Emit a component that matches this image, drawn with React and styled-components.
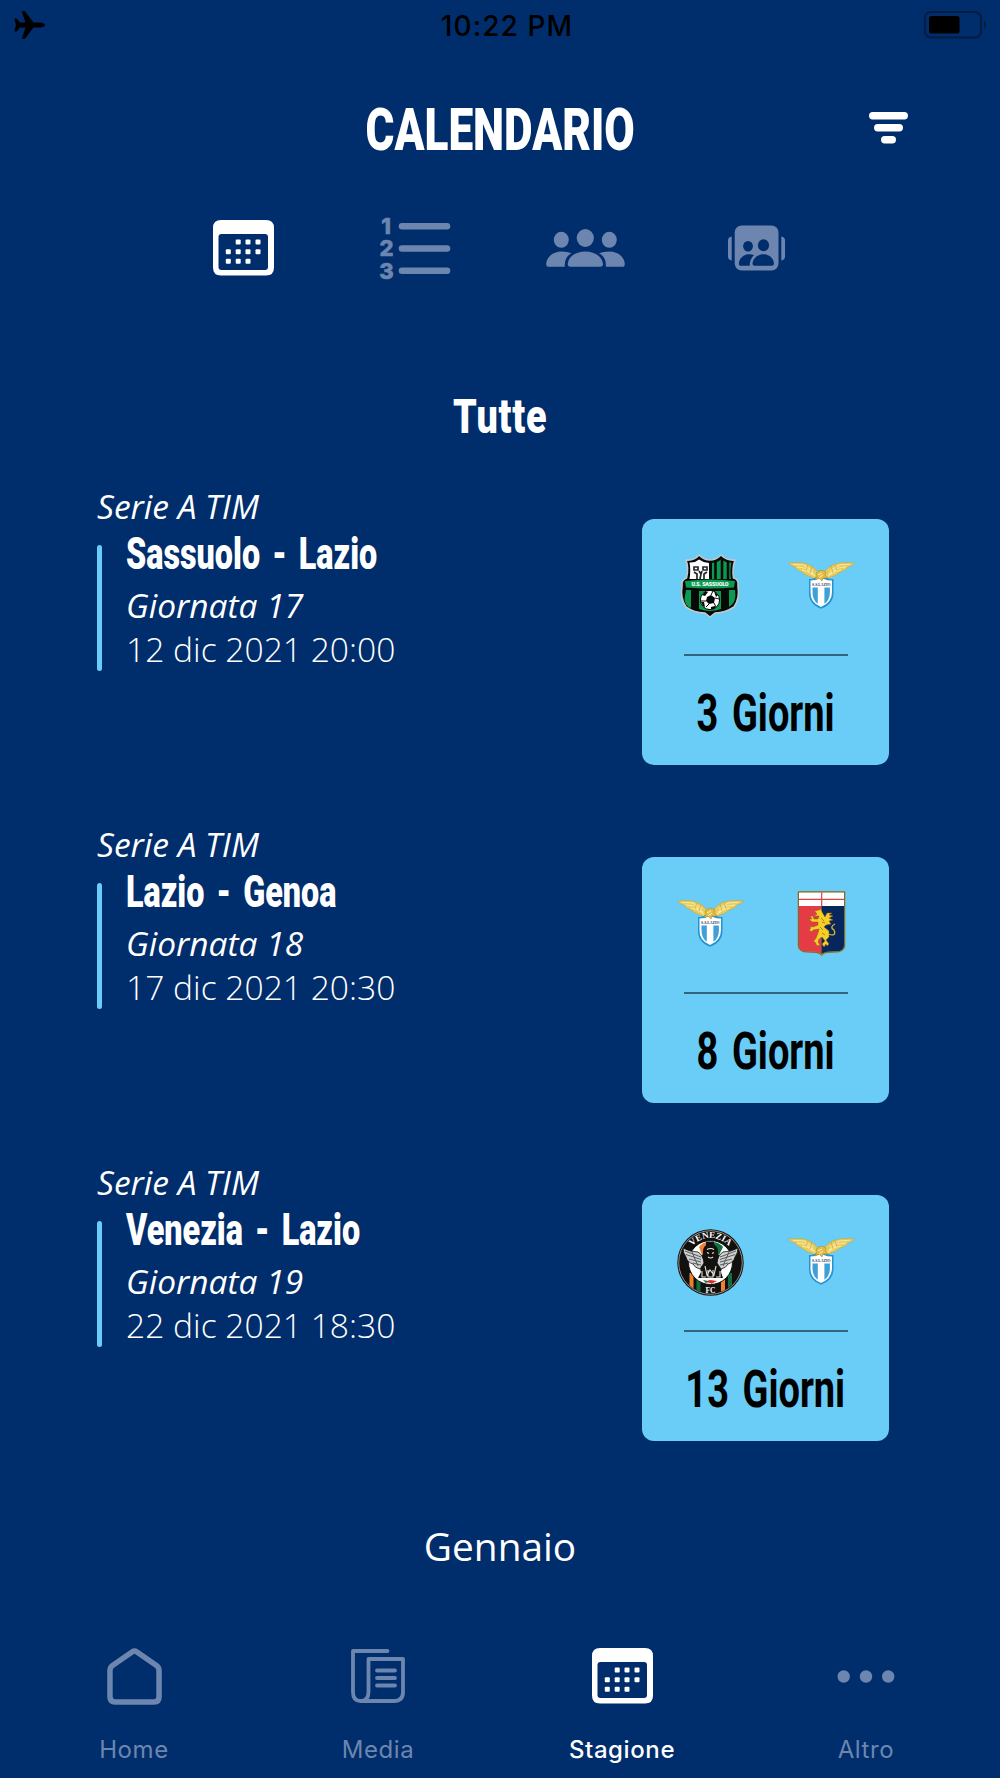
import styled, { createGlobalStyle } from "styled-components";

const MUTED = "#6c86af";

const matches = [
  {
    id: 1,
    league: "Serie A TIM",
    name: "Sassuolo - Lazio",
    round: "Giornata 17",
    date: "12 dic 2021 20:00",
    home: "sassuolo",
    away: "lazio",
    left: "3 Giorni",
  },
  {
    id: 2,
    league: "Serie A TIM",
    name: "Lazio - Genoa",
    round: "Giornata 18",
    date: "17 dic 2021 20:30",
    home: "lazio",
    away: "genoa",
    left: "8 Giorni",
  },
  {
    id: 3,
    league: "Serie A TIM",
    name: "Venezia - Lazio",
    round: "Giornata 19",
    date: "22 dic 2021 18:30",
    home: "venezia",
    away: "lazio",
    left: "13 Giorni",
  },
];

function App() {
  return (
    <Screen>
      <GlobalStyle />
      <StatusBar>
        <PlaneIcon />
        <Time>10:22 PM</Time>
        <BatteryIcon />
      </StatusBar>
      <Header>
        <span />
        <Title>CALENDARIO</Title>
        <FilterButton>
          <FilterIcon />
        </FilterButton>
      </Header>
      <Sections>
        <Section $active>
          <CalendarIcon />
        </Section>
        <Section>
          <RankingIcon />
        </Section>
        <Section>
          <TeamIcon />
        </Section>
        <Section>
          <CardsIcon />
        </Section>
      </Sections>
      <Filter>
        <Condensed $size={49} $scale={0.77} $spacing={1}>
          Tutte
        </Condensed>
      </Filter>
      <MatchList>
        {matches.map((match) => (
          <Match key={match.id} match={match} />
        ))}
      </MatchList>
      <Month>Gennaio</Month>
      <TabBar>
        <Tab>
          <TabIcon>
            <HomeIcon />
          </TabIcon>
          Home
        </Tab>
        <Tab>
          <TabIcon>
            <MediaIcon />
          </TabIcon>
          Media
        </Tab>
        <Tab $active>
          <TabIcon>
            <CalendarIcon />
          </TabIcon>
          Stagione
        </Tab>
        <Tab>
          <TabIcon>
            <DotsIcon />
          </TabIcon>
          Altro
        </Tab>
      </TabBar>
    </Screen>
  );
}

const Match = ({ match }) => {
  return (
    <MatchRow>
      <div>
        <League>{match.league}</League>
        <Details>
          <Marker />
          <div>
            <Name>
              <Condensed $size={44} $scale={0.735} $origin="left">
                {match.name}
              </Condensed>
            </Name>
            <Round>{match.round}</Round>
            <MatchDate>{match.date}</MatchDate>
          </div>
        </Details>
      </div>
      <Countdown>
        <Crests>
          <Crest team={match.home} />
          <Crest team={match.away} />
        </Crests>
        <Divider />
        <Days>
          <Condensed $size={51} $scale={0.745} $weight={700}>
            {match.left}
          </Condensed>
        </Days>
      </Countdown>
    </MatchRow>
  );
};

const Crest = ({ team }) => {
  const Drawing = crests[team];
  return (
    <svg width="67" height="67" viewBox="0 0 67 67">
      <Drawing />
    </svg>
  );
};

const Sassuolo = () => (
  <g>
    <path
      d="M9 7Q17 8 22 2Q27 7 33 7Q39 7 44 2Q50 8 58 7Q55 15 56.500 25Q62 26 61 33Q63 46 57 54Q48 60 38 60L33 64L28 60Q17 60 9 54Q3 46 5 33Q4 27 9.500 25Q12 15 9 7Z"
      fill="#050a08"
      stroke="#c3c9cb"
      strokeWidth="1.600"
      strokeLinejoin="round"
    />
    <path d="M12.500 9.500Q18 10 22 6.500Q27 10 32 10V26H12.500Q14 17 12.500 9.500Z" fill="#fff" />
    <path d="M35 10Q41 9 44 6.500Q49 10 54.500 9.500Q52.500 17 54 26H35Z" fill="#0b9a52" />
    <path d="M38.500 9V26M45 7V26M51 9V26" stroke="#050a08" strokeWidth="2.600" />
    <path
      d="M17 14h4v3h-4zM26 14h4v3h-4zM17 19l3 2v5M30 19l-3 2v5M22 18l2 3-1 5M25 18l-1 3"
      fill="none"
      stroke="#20292a"
      strokeWidth="1.700"
    />
    <path d="M8 28Q33 25 58 28L57 34.500Q33 36.500 9 34.500Z" fill="#0b9a52" />
    <text
      x="33"
      y="33.200"
      textAnchor="middle"
      fill="#fff"
      fontFamily="Roboto, sans-serif"
      fontWeight="900"
      fontSize="5.400"
      textLength="37"
    >
      U.S. SASSUOLO
    </text>
    <path
      d="M9 37H14V55Q8 53 7.500 46ZM22 38H44V56Q33 60 22 56ZM52 37H58Q60 50 52 54Z"
      fill="#0b9a52"
    />
    <circle cx="33" cy="47" r="9.600" fill="#fff" stroke="#050a08" strokeWidth="1" />
    <path
      d="M30 44l4-2 4 3-1 5-5 1-3-3zM25 42l3-3 3 0-3 4zM37 38l4 4-2 2zM24 49l3 0 1 5-2-1zM34 54l4-1 0 3-4 0z"
      fill="#050a08"
    />
    <path d="M34 42l2-4M38 45l4 1M37 50l2 4M32 51l-3 3M29 48l-5 0" stroke="#050a08" />
  </g>
);

const Lazio = () => (
  <g>
    <path
      d="M0.500 9.800H14Q23 11 28 17L33 23L38 17Q43 11 53 9.800H66.500L64 12.500L60 14L57 17L52 19L48 22L43 24L39 26L33 28L27 26L23 24L18 22L14 19L10 17L7 14L3 12.500Z"
      fill="#e7cc5c"
      stroke="#c9a53c"
      strokeWidth="0.600"
      strokeLinejoin="round"
    />
    <path
      d="M5 11.300L16 12L25 18M9 14L17 15L26 21M14 17L20 18.500L27 23M62 11.300L51 12L42 18M58 14L50 15L41 21M53 17L47 18.500L40 23"
      fill="none"
      stroke="#f7e8a0"
      strokeWidth="1.100"
    />
    <path d="M20 11.500l-2 6M24 13l-2 7M47 11.500l2 6M43 13l2 7" stroke="#c9a53c" strokeWidth="0.700" />
    <path
      d="M21 26Q26 26 28 24Q33 28 38 24Q40 26 45.500 26V39Q46 51 33 55.800Q20.500 51 21 39Z"
      fill="#2493d2"
    />
    <path
      d="M22.500 27.500Q28 27 30 26H36Q39 27.500 44 27.500V39Q44 49.500 33 54Q22 49.500 22.500 39Z"
      fill="#fff"
    />
    <path
      d="M24.500 34.500H29.800V50.800Q24.500 47 24.500 39ZM36.400 34.500H41.900V39Q42 47 36.400 50.800Z"
      fill="#3e9fd9"
    />
    <path
      d="M28 20Q33 15 38 19L37 22L40 25L35 25L34 28L31 25L27 27L29 23Z"
      fill="#dfbd48"
      stroke="#b98d2c"
      strokeWidth="0.600"
    />
    <path d="M30 22l4-2M31 25l4-3" stroke="#fff0a8" />
    <text
      x="33.300"
      y="32.900"
      textAnchor="middle"
      fill="#26375a"
      fontFamily="Liberation Serif, serif"
      fontWeight="700"
      fontSize="4.600"
      textLength="18.500"
      lengthAdjust="spacingAndGlyphs"
    >
      S.S.LAZIO
    </text>
  </g>
);

const Genoa = () => (
  <g>
    <path
      d="M9.500 0H57.500V54Q57.500 60 51 61.500L42 62Q35 62 33.700 66Q32 62 25 62L16 61.500Q9.500 60 9.500 54Z"
      fill="#b4a64f"
    />
    <path d="M11 1.400H56V15H11Z" fill="#fff" />
    <path d="M11 15H33.500V63Q31 60.500 25 60.500L16 60Q11 59 11 54Z" fill="#e43b45" />
    <path d="M33.500 15H56V54Q56 59 51 60L42 60.500Q36 60.500 33.500 63Z" fill="#07265c" />
    <path d="M33.700 1.400V15M11 8.300H56" stroke="#dd3f46" strokeWidth="1.200" />
    <path
      d="M10.400 0.900H56.600V54Q56.600 59 51 60.700L42 61.200Q35.500 61.200 33.600 64.200Q31.500 61.200 25 61.200L16 60.700Q10.400 59 10.400 54Z"
      fill="none"
      stroke="#353d47"
      strokeWidth="0.600"
    />
    <path
      d="M26.500 20L31 19L33 18L34 21L37 26L39 22L44 22L41 24L45 25L41 27L45 29L41 30L43 33L38 34L36 36L41 40L41 46L38 49L41 53L39 55L38 53L36 56L34 53L37 50L34 46L31 48L30 51L32 54L29 55L27 51L25 51L28 47L30 42L31 38L25 39L24 41L21 39L23 37L21 35L25 36L30 34L30 31L24 31L21 28L24 28L22 25L25 25L26 28L30 28L31 25L26 25L29 23Z"
      fill="#f6cf24"
      stroke="#8b5a24"
      strokeWidth="0.500"
      strokeLinejoin="round"
    />
    <path d="M40 43Q49 46 46 39Q41 36 47 33" fill="none" stroke="#d8b72f" strokeWidth="1.300" />
    <path d="M33 27l3 3M34 31l3 1M32 36l3 3M34 42l3 2" stroke="#a06a20" strokeWidth="0.800" />
  </g>
);

const Venezia = () => (
  <g>
    <clipPath id="venezia-disc">
      <circle cx="33.500" cy="33.500" r="31" />
    </clipPath>
    <circle cx="33.500" cy="33.500" r="33.200" fill="#12110f" />
    <circle cx="33.500" cy="33.500" r="31.800" fill="none" stroke="#e8e5dd" strokeWidth="0.600" />
    <g clipPath="url(#venezia-disc)">
      <path d="M12.500 44h4v20h-4zM44 50h4v16h-4z" fill="#ee8130" />
      <path d="M19.500 48h4v20h-4zM51 44h4v20h-4z" fill="#0f7040" />
    </g>
    <circle cx="33.500" cy="33.500" r="22" fill="#fff" stroke="#12110f" strokeWidth="1" />
    <path d="M22 18Q26 13 31 13V23L25 26Z" fill="#ee8130" />
    <path d="M37 13Q43 14 46 18L42 26L37 23Z" fill="#0f7040" />
    <path d="M29 12.500h8v12h-8z" fill="#12110f" />
    <path d="M27 53l6-2 1 3zM33 51l7 1-6 3z" fill="#cf2e2e" />
    <path d="M26 51l5 1-2 2z" fill="#0f7040" />
    <path
      d="M33.500 14Q42 16 41 25L46 32L44 43L46 49H21L24 43L21 32L26 25Q25 16 33.500 14Z"
      fill="#12110f"
    />
    <path
      d="M6 19Q13 23 21 23Q26 26 27 34L23 40Q18 39 16 35Q10 33 9 28Q6 24 6 19ZM61 19Q54 23 46 23Q41 26 40 34L44 40Q49 39 51 35Q57 33 58 28Q61 24 61 19Z"
      fill="#cfd0d1"
      stroke="#12110f"
      strokeWidth="0.800"
    />
    <path
      d="M8 22l16 6M9 25.500l15 5M12 30l12 3M16 34l8 2M59 22l-16 6M58 25.500l-15 5M55 30l-12 3M51 34l-8 2M15 23l6 14M52 23l-6 14"
      stroke="#4c4e50"
      strokeWidth="0.900"
    />
    <path
      d="M30 20.500q3.500-2 7 0M30 23.500l2 1M37 23.500l-2 1M31 28q2.500 2 5 0M28 37l2 9 3-5 4 5 2-9M25 42v6h4M43 42v6h-4M31 41v7h5v-7"
      fill="none"
      stroke="#e8e5dd"
      strokeWidth="1.100"
    />
    <path id="venezia-arc" d="M9 33.500A24.500 24.500 0 0 1 58 33.500" fill="none" />
    <text
      fill="#fff"
      fontFamily="Liberation Serif, serif"
      fontWeight="700"
      fontSize="9"
      textAnchor="middle"
    >
      <textPath href="#venezia-arc" startOffset="50%">
        VENEZIA
      </textPath>
    </text>
    <text
      x="33.500"
      y="63.800"
      textAnchor="middle"
      fill="#fff"
      fontFamily="Liberation Serif, serif"
      fontWeight="700"
      fontSize="7.500"
    >
      FC
    </text>
  </g>
);

const crests = { sassuolo: Sassuolo, lazio: Lazio, genoa: Genoa, venezia: Venezia };

const PlaneIcon = () => (
  <svg width="31" height="28" viewBox="0 0 31 28">
    <path
      d="M31 14C31 15.500 28.500 16.500 26 16.500H19.500L11.500 27Q11 28 10 28H8.500Q7.700 28 8 27L11.500 16.500H6L3 20Q2.500 20.500 2 20.500H1Q0.300 20.500 0.500 19.700L2 14L0.500 8.300Q0.300 7.500 1 7.500H2Q2.500 7.500 3 8L6 11.500H11.500L8 1Q7.700 0 8.500 0H10Q11 0 11.500 1L19.500 11.500H26C28.500 11.500 31 12.500 31 14Z"
      fill="#000"
    />
  </svg>
);

const BatteryIcon = () => (
  <svg width="63" height="28" viewBox="0 0 63 28">
    <rect x="1" y="1" width="56" height="25.500" rx="6" fill="none" stroke="#021c46" strokeWidth="2" />
    <rect x="5" y="5" width="30.500" height="17.500" rx="2.500" fill="#000" />
    <path d="M60 9.500Q62.500 10.500 62.500 13.800Q62.500 17 60 18Z" fill="#021c46" />
  </svg>
);

const FilterIcon = () => (
  <svg width="39" height="32" viewBox="0 0 39 32">
    <rect width="39" height="7.500" rx="3.700" fill="#fff" />
    <rect x="5" y="12" width="29" height="7.500" rx="3.700" fill="#fff" />
    <rect x="12" y="24" width="15" height="7.500" rx="3.700" fill="#fff" />
  </svg>
);

const calendarDays = [
  [25.2, 22],
  [35, 22],
  [45, 22],
  [15.3, 31.7],
  [25.2, 31.7],
  [35, 31.7],
  [45, 31.7],
  [15.3, 41.3],
  [25.2, 41.3],
  [35, 41.3],
];

const CalendarIcon = () => (
  <svg width="61" height="56" viewBox="0 0 61 56">
    <path
      fillRule="evenodd"
      d="M8 0H53Q61 0 61 8V47.500Q61 55.500 53 55.500H8Q0 55.500 0 47.500V8Q0 0 8 0ZM8.500 14Q5.500 14 5.500 17V47Q5.500 50 8.500 50H52Q55 50 55 47V17Q55 14 52 14Z"
      fill="currentColor"
    />
    {calendarDays.map(([x, y]) => (
      <rect
        key={`${x}-${y}`}
        x={x - 2.5}
        y={y - 2.5}
        width="5"
        height="5"
        rx="1"
        fill="currentColor"
      />
    ))}
  </svg>
);

const RankingIcon = () => (
  <svg width="70" height="64" viewBox="0 0 70 64">
    <path
      d="M22 10.200H67M22 32.500H67M22 54.700H67"
      stroke="currentColor"
      strokeWidth="6.600"
      strokeLinecap="round"
    />
    <g
      fill="currentColor"
      stroke="currentColor"
      strokeWidth="0.600"
      strokeLinejoin="round"
      fontFamily="Inter, sans-serif"
      fontWeight="800"
      fontSize="22"
      textAnchor="middle"
    >
      <text x="6" y="17.500">1</text>
      <text x="6.500" y="40.300">2</text>
      <text x="6.500" y="62.700">3</text>
    </g>
  </svg>
);

const TeamIcon = () => (
  <svg width="79" height="38" viewBox="0 0 79 38">
    <g fill="currentColor">
      <ellipse cx="15.300" cy="10.800" rx="7.500" ry="8" />
      <ellipse cx="39.300" cy="9" rx="8.600" ry="9" />
      <ellipse cx="63.300" cy="10.800" rx="7.500" ry="8" />
      <path d="M25.500 24.300Q18 28 18.800 37.800H3Q0 37.800 0.200 34.500C1 27 8 22.500 15.500 22.500Q21.500 22.500 25.500 24.300Z" />
      <path d="M53 24.300Q60.500 28 59.800 37.800H76Q79 37.800 78.800 34.500C78 27 71 22.500 63.500 22.500Q57 22.500 53 24.300Z" />
      <path d="M24.500 37.800Q21.700 37.800 21.700 35C22.500 27 30.500 22.500 39.300 22.500C48 22.500 56 27 57 35Q57 37.800 54.200 37.800Z" />
    </g>
  </svg>
);

const CardsIcon = () => (
  <svg width="57" height="46" viewBox="0 0 57 46">
    <rect x="6.700" y="0.500" width="43.800" height="45" rx="7" fill="currentColor" />
    <path
      d="M3.700 11.500V35.500Q0 35 0 31.500V15.500Q0 12 3.700 11.500ZM53.300 11.500V35.500Q57 35 57 31.500V15.500Q57 12 53.300 11.500Z"
      fill="currentColor"
    />
    <g fill="#002d6b">
      <ellipse cx="20" cy="21.300" rx="4.900" ry="5.300" />
      <ellipse cx="35.500" cy="20.200" rx="5.600" ry="6" />
      <path d="M26 30Q21.500 34.500 21.700 40.800H12.500Q10.700 40.800 10.800 39C11 33 16 29.200 21 29.200Q24 29.200 26 30Z" />
      <path d="M26.500 40.800Q24.400 40.800 24.500 38.500C25 33 30 29.200 35.500 29.200C41 29.200 45.500 33 46 38.500Q46 40.800 44 40.800Z" />
    </g>
  </svg>
);

const HomeIcon = () => (
  <svg width="55" height="57" viewBox="0 0 56 58">
    <path
      d="M25.500 4Q28 2.200 30.500 4L50 17.500Q53 19.500 53 23V50Q53 55 48 55H8Q3 55 3 50V23Q3 19.500 6 17.500Z"
      fill="none"
      stroke="currentColor"
      strokeWidth="5.600"
    />
  </svg>
);

const MediaIcon = () => (
  <svg width="54" height="54" viewBox="0 0 54 54">
    <path
      d="M36.500 2H2V43Q2 52 9.500 52Q17.500 52 17.500 43V10H52V43Q52 52 43 52H9.500M26 21.500H44M26 29H44M26 36.500H44"
      fill="none"
      stroke="currentColor"
      strokeWidth="3.800"
      strokeLinecap="round"
      strokeLinejoin="round"
    />
  </svg>
);

const DotsIcon = () => (
  <svg width="58" height="13" viewBox="0 0 58 13">
    <circle cx="6.700" cy="6.500" r="6.200" fill="currentColor" />
    <circle cx="29" cy="6.500" r="6.200" fill="currentColor" />
    <circle cx="51.200" cy="6.500" r="6.200" fill="currentColor" />
  </svg>
);

const GlobalStyle = createGlobalStyle`
  * {
    box-sizing: border-box;
  }
  body {
    margin: 0;
    background-color: #002d6b;
  }
  svg {
    display: block;
    flex: none;
    overflow: visible;
  }
`;

const Screen = styled.div`
  width: 1000px;
  height: 1778px;
  overflow: hidden;
  background-color: #002d6b;
  color: white;
  font-family: "Open Sans", sans-serif;
`;

const StatusBar = styled.div`
  display: grid;
  grid-template-columns: 1fr auto 1fr;
  align-items: center;
  height: 51px;
  padding: 0 13px 2px 14px;
  svg:last-child {
    justify-self: end;
  }
`;

const Time = styled.span`
  padding-left: 13px;
  padding-top: 2px;
  font-family: Inter, sans-serif;
  font-size: 28px;
  font-weight: 500;
  letter-spacing: 1.1px;
  color: #000;
`;

//testo stretto: il font viene compresso in orizzontale
const Condensed = styled.span`
  display: inline-block;
  font-family: Roboto, sans-serif;
  font-size: ${(props) => props.$size}px;
  font-weight: ${(props) => props.$weight || 900};
  letter-spacing: ${(props) => props.$spacing || 0}px;
  word-spacing: 5.5px;
  white-space: nowrap;
  transform: scaleX(${(props) => props.$scale});
  transform-origin: ${(props) => props.$origin || "center"};
`;

const Header = styled.header`
  display: grid;
  grid-template-columns: 1fr auto 1fr;
  align-items: center;
  height: 158px;
  padding: 0 92px;
`;

const Title = styled(Condensed).attrs({ as: "h1", $size: 60, $scale: 0.735 })`
  margin: 0 0 2px;
`;

const FilterButton = styled.button`
  justify-self: end;
  padding: 0;
  margin-bottom: 4px;
  border: none;
  background: none;
`;

const Sections = styled.nav`
  display: grid;
  grid-template-columns: repeat(4, 171px);
  justify-content: center;
  height: 78px;
`;

const Section = styled.div`
  display: flex;
  align-items: center;
  justify-content: center;
  color: ${(props) => (props.$active ? "white" : MUTED)};
`;

const Filter = styled.div`
  display: flex;
  align-items: center;
  justify-content: center;
  height: 64px;
  margin-top: 97px;
`;

const MatchList = styled.div`
  margin-top: 34px;
`;

const MatchRow = styled.div`
  display: flex;
  justify-content: space-between;
  height: 338px;
  padding: 0 111px 0 97px;
`;

const League = styled.div`
  height: 47px;
  font-size: 33.5px;
  font-style: italic;
  line-height: 49px;
`;

const Details = styled.div`
  display: flex;
  gap: 24px;
`;

const Marker = styled.div`
  width: 5px;
  height: 126px;
  margin-top: 16px;
  border-radius: 3px;
  background-color: #69cdf7;
`;

const Name = styled.div`
  display: flex;
  align-items: center;
  height: 50px;
`;

const Round = styled.div`
  font-size: 33.5px;
  font-style: italic;
  line-height: 52px;
`;

const MatchDate = styled.div`
  font-size: 33.6px;
  font-weight: 300;
  line-height: 37px;
`;

const Countdown = styled.div`
  display: flex;
  flex-direction: column;
  align-items: center;
  width: 247px;
  height: 246px;
  margin-top: 37px;
  padding-top: 34px;
  border-radius: 12px;
  background-color: #69cdf7;
`;

const Crests = styled.div`
  display: flex;
  gap: 44px;
`;

const Divider = styled.div`
  width: 164px;
  height: 2px;
  margin-top: 34px;
  background-color: #35647f;
`;

const Days = styled.div`
  display: flex;
  justify-content: center;
  align-items: center;
  height: 60px;
  margin-top: 27px;
  color: #000;
`;

const Month = styled.div`
  height: 99px;
  font-size: 38.8px;
  line-height: 100px;
  text-align: center;
`;

const TabBar = styled.nav`
  display: grid;
  grid-template-columns: repeat(4, 244px);
  justify-content: center;
  padding-top: 51px;
`;

const Tab = styled.div`
  display: flex;
  flex-direction: column;
  align-items: center;
  gap: 24px;
  font-family: Inter, sans-serif;
  font-size: 24px;
  font-weight: ${(props) => (props.$active ? 500 : 400)};
  letter-spacing: 0.6px;
  line-height: 40px;
  color: ${(props) => (props.$active ? "white" : MUTED)};
`;

const TabIcon = styled.div`
  display: flex;
  align-items: center;
  height: 60px;
`;

export default App;
